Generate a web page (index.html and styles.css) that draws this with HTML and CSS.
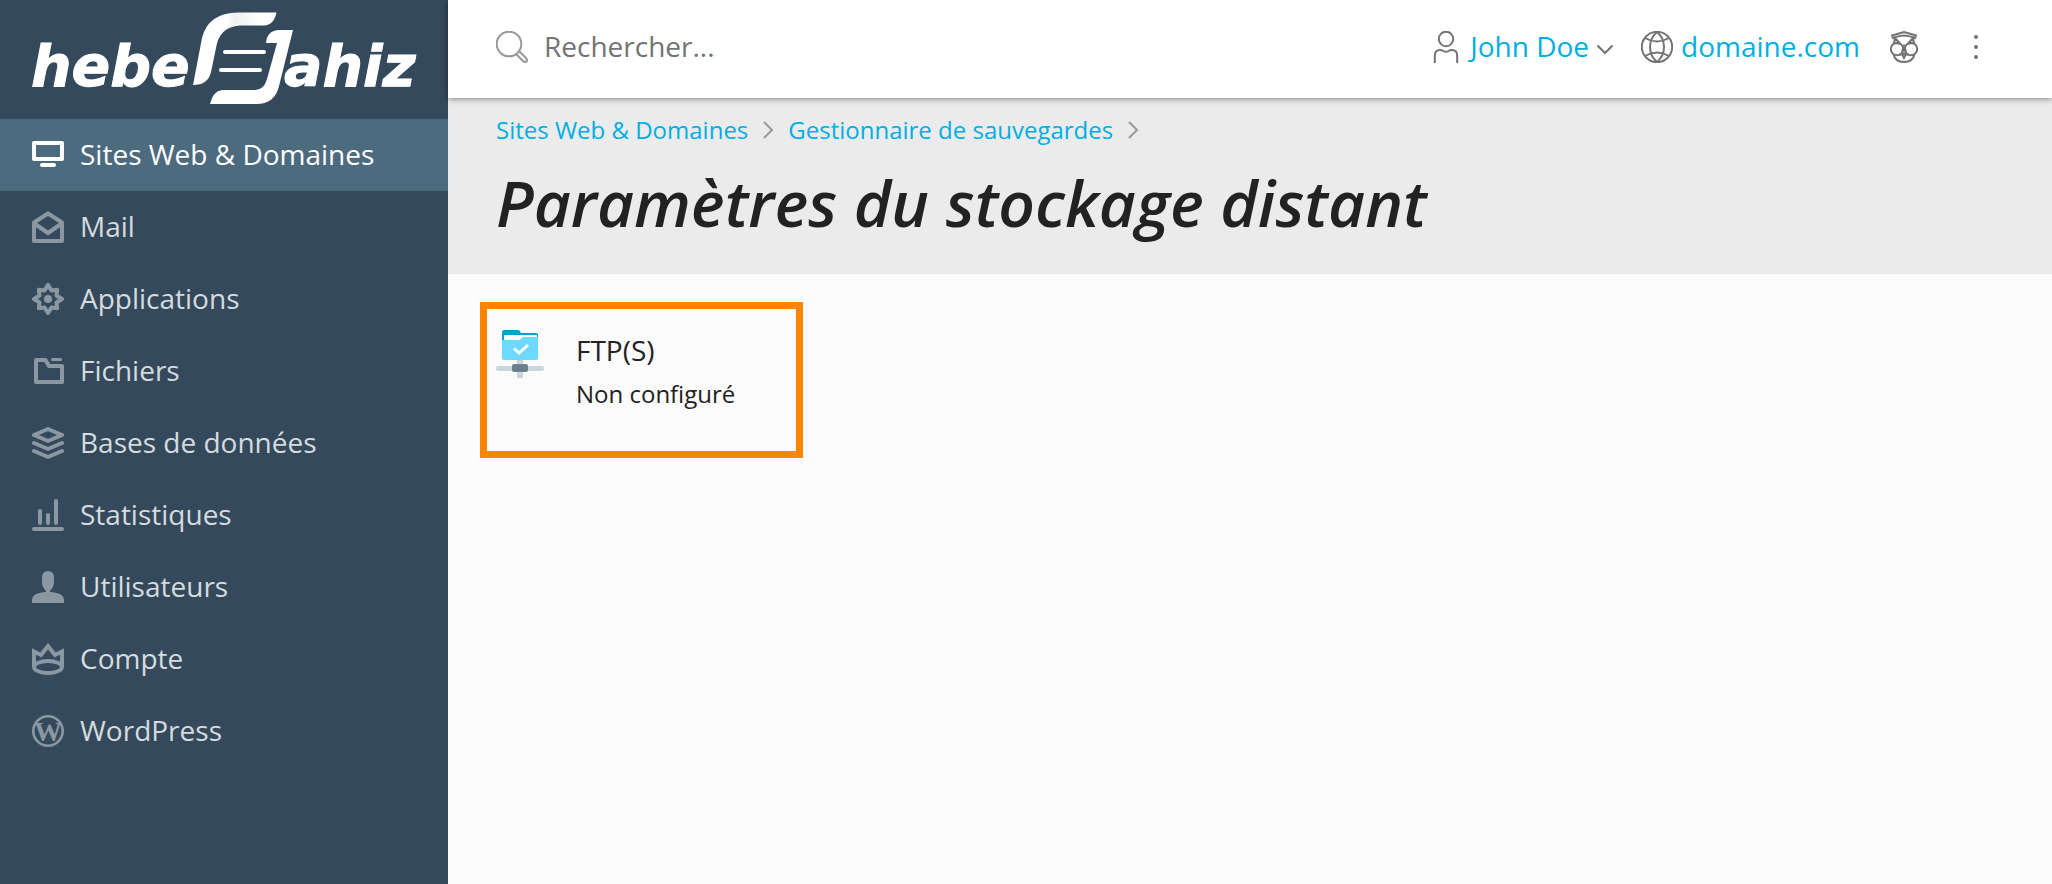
FILE: index.html
```html
<!DOCTYPE html>
<html lang="fr">

<head>
    <meta charset="UTF-8">
    <meta name="viewport" content="width=device-width, initial-scale=1.0">
    <title>Paramètres du stockage distant</title>
    <link rel="stylesheet" href="styles.css">
</head>

<body>
    <aside class="sidebar">
        <a href="#" class="logo" aria-label="hebergjahiz">
            <svg viewBox="0 0 448 119" fill="#fff">
                <defs>
                    <linearGradient id="fold" x1="0" x2="1">
                        <stop offset="0.4" stop-color="#fff" />
                        <stop offset="0.5" stop-color="#eef0f1" />
                        <stop offset="0.8" stop-color="#fff" />
                    </linearGradient>
                </defs>
                <text class="logo-text" x="31" y="86">hebe</text>
                <path fill="url(#fold)" d="M193 85L202 38Q208 13 238 12.500H276.500Q274 25 264 25.500H240Q219 27 216 48L211 72Q208 85 193 85Z" />
                <path d="M293 30H278Q267 31 266 43H277L267 79Q264 90 255 90H222Q213 91 210 104H256Q275 104 279 86Z" />
                <path d="M225 52H264M221 70H260" stroke="#fff" stroke-width="4" stroke-linecap="round" />
                <text class="logo-text" x="284" y="86">ahiz</text>
            </svg>
        </a>
        <nav class="menu">
            <a href="#" class="menu-item active">
                <svg class="icon" viewBox="0 0 32 32"><path d="M2 4H30V20H2Z" fill="none" stroke="currentColor" stroke-width="4" stroke-linejoin="round" /><path d="M10 26H22" stroke="currentColor" stroke-width="4" stroke-linecap="round" /></svg>
                <span>Sites Web &amp; Domaines</span>
            </a>
            <a href="#" class="menu-item">
                <svg class="icon line" viewBox="0 0 32 32"><path d="M2 11.500L16 2.500L30 11.500V30H2Z" /><path d="M3 13L16 22L29 13" /></svg>
                <span>Mail</span>
            </a>
            <a href="#" class="menu-item">
                <svg class="icon line" viewBox="0 0 32 32"><path d="M16 2L19.500 7.500L25.200 6.800L24.500 12.500L30 16L24.500 19.500L25.200 25.200L19.500 24.500L16 30L12.500 24.500L6.800 25.200L7.500 19.500L2 16L7.500 12.500L6.800 6.800L12.500 7.500Z" /><circle cx="16" cy="16" r="4" fill="currentColor" stroke="none" /></svg>
                <span>Applications</span>
            </a>
            <a href="#" class="menu-item">
                <svg class="icon line" viewBox="0 0 32 32"><path d="M4 5H13.500L17 11H30V27H4Z" /><path class="tab" d="M20.500 4.500H28.500" /></svg>
                <span>Fichiers</span>
            </a>
            <a href="#" class="menu-item">
                <svg class="icon line" viewBox="0 0 32 32"><path d="M2 8L16 2L30 8L16 14Z" /><path d="M2 16L16 22L30 16M2 24L16 30L30 24" stroke-linecap="round" /></svg>
                <span>Bases de données</span>
            </a>
            <a href="#" class="menu-item">
                <svg class="icon line" viewBox="0 0 32 32"><path d="M2 30H30M8 12V24M16 16V24M24 2V24" stroke-linecap="round" /></svg>
                <span>Statistiques</span>
            </a>
            <a href="#" class="menu-item">
                <svg class="icon" viewBox="0 0 32 32" fill="currentColor"><path d="M10 7Q10 0 16 0T22 7V11Q22 16 18 20V21Q32 22 32 29V31Q32 32 31 32H1Q0 32 0 31V29Q0 22 14 21V20Q10 16 10 11Z" /></svg>
                <span>Utilisateurs</span>
            </a>
            <a href="#" class="menu-item">
                <svg class="icon line" viewBox="0 0 32 32"><path d="M2 24V8.500L9 12L16 3L23 12L30 8.500V24" stroke-linejoin="miter" /><ellipse cx="16" cy="24" rx="14" ry="6" /></svg>
                <span>Compte</span>
            </a>
            <a href="#" class="menu-item">
                <svg class="icon" viewBox="0 0 32 32"><circle cx="16" cy="16" r="14.700" fill="none" stroke="currentColor" stroke-width="2.600" /><text class="wp-letter" x="16" y="26" text-anchor="middle">W</text></svg>
                <span>WordPress</span>
            </a>
        </nav>
    </aside>

    <div class="page">
        <header class="topbar">
            <label class="search">
                <svg class="icon thin" viewBox="0 0 32 32"><circle cx="13" cy="13" r="12.300" /><path d="M20 23L27 30Q29 32 30.500 30.500T30 27L23 20" /></svg>
                <input type="search" placeholder="Rechercher..." aria-label="Rechercher">
            </label>
            <div class="tools">
                <button type="button" class="user">
                    <svg class="icon" viewBox="0 0 32 32"><ellipse cx="16" cy="8" rx="7.200" ry="7.300" /><path d="M4.800 32V25Q4.800 19 10 19Q12 19 13.500 20Q16 21.500 18.500 20Q20 19 22 19Q27.200 19 27.200 25V32" /></svg>
                    <span>John Doe</span>
                    <svg class="caret" viewBox="0 0 16 32"><path d="M.500 14.500L8 22L15.500 14.500" /></svg>
                </button>
                <a href="#" class="domain">
                    <svg class="icon" viewBox="0 0 32 32"><circle cx="16" cy="16" r="15.200" /><path d="M16 1Q9 7 9 16T16 31M16 1Q23 7 23 16T16 31M4 7Q16 14 28 7M4 25Q16 18 28 25" /></svg>
                    <span>domaine.com</span>
                </a>
                <button type="button" class="tool" aria-label="Aide">
                    <svg class="icon" viewBox="0 0 32 32"><path d="M4 4.500L16 1L28 4.500L27 7Q20 4.500 16 4.500T5 7Z" /><path d="M7 7L6 12L12 12.500ZM25 7L26 12L20 12.500Z" /><circle cx="9" cy="18" r="6.200" /><circle cx="23" cy="18" r="6.200" /><path d="M5.500 23Q7 31 16 31T26.500 23M11 24Q16 22 21 24" /><path d="M14.500 19L16 15L17.500 19V24L16 27L14.500 24Z" /></svg>
                </button>
                <button type="button" class="tool" aria-label="Plus">
                    <svg class="icon dots" viewBox="0 0 32 32"><circle cx="16" cy="6" r="2" /><circle cx="16" cy="16" r="2" /><circle cx="16" cy="26" r="2" /></svg>
                </button>
            </div>
        </header>

        <div class="heading">
            <nav class="breadcrumbs">
                <a href="#">Sites Web &amp; Domaines</a>
                <svg class="arrow" viewBox="0 0 16 24"><path d="M4 4L12 12L4 20" /></svg>
                <a href="#">Gestionnaire de sauvegardes</a>
                <svg class="arrow" viewBox="0 0 16 24"><path d="M4 4L12 12L4 20" /></svg>
            </nav>
            <h1>Paramètres du stockage distant</h1>
        </div>

        <main class="content">
            <a href="#" class="storage">
                <svg class="storage-icon" viewBox="0 0 48 48">
                    <path d="M6 12V2Q6 0 8 0H22Q24 0 25 3H40Q42 3 42 5V12Z" fill="#00a3cf" />
                    <path d="M8 11V6Q8 5 9 5H40Q41 5 41 6V11Z" fill="#fff" />
                    <path d="M6 10H22Q24 10 25 8.500T28 7H42V28Q42 30 40 30H8Q6 30 6 28Z" fill="#6ed9ff" />
                    <path d="M18 18.500L23 23L32 15" fill="none" stroke="#fff" stroke-width="3" />
                    <path d="M21 30H27V48H21Z" fill="#c9d6dc" />
                    <rect y="36" width="48" height="5" rx="2" fill="#c9d6dc" />
                    <rect x="16" y="34" width="16" height="8" rx="2" fill="#6b8088" />
                </svg>
                <span class="storage-text">
                    <span class="storage-name">FTP(S)</span>
                    <span class="storage-state">Non configuré</span>
                </span>
            </a>
        </main>
    </div>
</body>

</html>
```
FILE: styles.css
```css
* {
    box-sizing: border-box;
}

body {
    display: flex;
    min-height: 100vh;
    margin: 0;
    background-color: #fbfbfb;
    color: #222;
    font-family: "Open Sans", sans-serif;
    font-size: 28px;
    line-height: 40px;
}

a {
    color: #00aee5;
    text-decoration: none;
}

button {
    padding: 0;
    border: none;
    background: none;
    font: inherit;
    cursor: pointer;
}

svg {
    display: block;
    flex-shrink: 0;
}

.icon {
    width: 32px;
    height: 32px;
}

/* sidebar */
.sidebar {
    flex: 0 0 448px;
    background-color: #34495c;
}

.logo svg {
    width: 100%;
}

.logo-text {
    font-family: "DejaVu Sans", sans-serif;
    font-size: 57px;
    font-weight: bold;
    font-style: italic;
    stroke: #fff;
    stroke-width: 1;
}

.menu-item {
    display: flex;
    align-items: center;
    gap: 16px;
    height: 72px;
    padding: 0 32px;
    color: #d6dbde;
}

.menu-item span,
.tools span,
.search input {
    padding-bottom: 2px;
}

.menu-item .icon {
    color: #8b98a2;
}

.menu-item.active,
.menu-item.active .icon {
    color: #fff;
}

.menu-item.active {
    background-color: #4d6b7f;
}

.line {
    fill: none;
    stroke: currentColor;
    stroke-width: 4;
    stroke-linejoin: round;
}

.tab {
    stroke-width: 3;
    stroke-linecap: round;
}

.wp-letter {
    fill: currentColor;
    font-family: "Liberation Serif", serif;
    font-size: 28px;
    font-weight: bold;
}

/* top bar */
.page {
    flex: 1;
    min-width: 0;
}

.topbar {
    position: relative;
    display: flex;
    align-items: center;
    justify-content: space-between;
    height: 98px;
    padding: 0 60px 4px 48px;
    background-color: #fff;
    box-shadow: 0 1px 6px rgba(0, 0, 0, 0.45);
}

.search {
    display: flex;
    flex: 1;
    align-items: center;
    gap: 16px;
}

.search input {
    flex: 1;
    padding-top: 0;
    padding-left: 0;
    border: none;
    outline: none;
    font: inherit;
}

.search input::placeholder {
    color: #737373;
    opacity: 1;
}

.thin {
    fill: none;
    stroke: #999;
    stroke-width: 2;
}

.tools,
.user,
.domain {
    display: flex;
    align-items: center;
}

.user,
.domain {
    gap: 8px;
    color: #00aee5;
}

.user {
    margin-right: 28px;
}

.tools svg {
    fill: none;
    stroke: #737373;
    stroke-width: 2;
}

.tools .dots {
    fill: #737373;
    stroke: none;
}

.tools .caret {
    width: 16px;
    height: 32px;
    overflow: visible;
}

.tool {
    margin-left: 28px;
}

.tool + .tool {
    margin-left: 40px;
}

/* heading */
.heading {
    height: 176px;
    padding: 16px 48px;
    background-color: #ebebeb;
}

.breadcrumbs {
    display: flex;
    align-items: center;
    gap: 12px;
    font-size: 24px;
    line-height: 32px;
}

.arrow {
    width: 16px;
    height: 24px;
    fill: none;
    stroke: #999;
    stroke-width: 2;
}

h1 {
    margin: 12px 0 0;
    font-size: 64px;
    font-weight: 600;
    font-style: italic;
    line-height: 90px;
}

/* content */
.content {
    padding: 28px 32px;
}

.storage {
    display: inline-flex;
    gap: 32px;
    width: 323px;
    min-height: 156px;
    padding: 21px 9px;
    border: 7px solid #ff8500;
    color: #222;
}

.storage-icon {
    width: 48px;
    height: 48px;
}

.storage-text {
    display: flex;
    flex-direction: column;
    gap: 4px;
}

.storage-state {
    font-size: 24px;
}
```
